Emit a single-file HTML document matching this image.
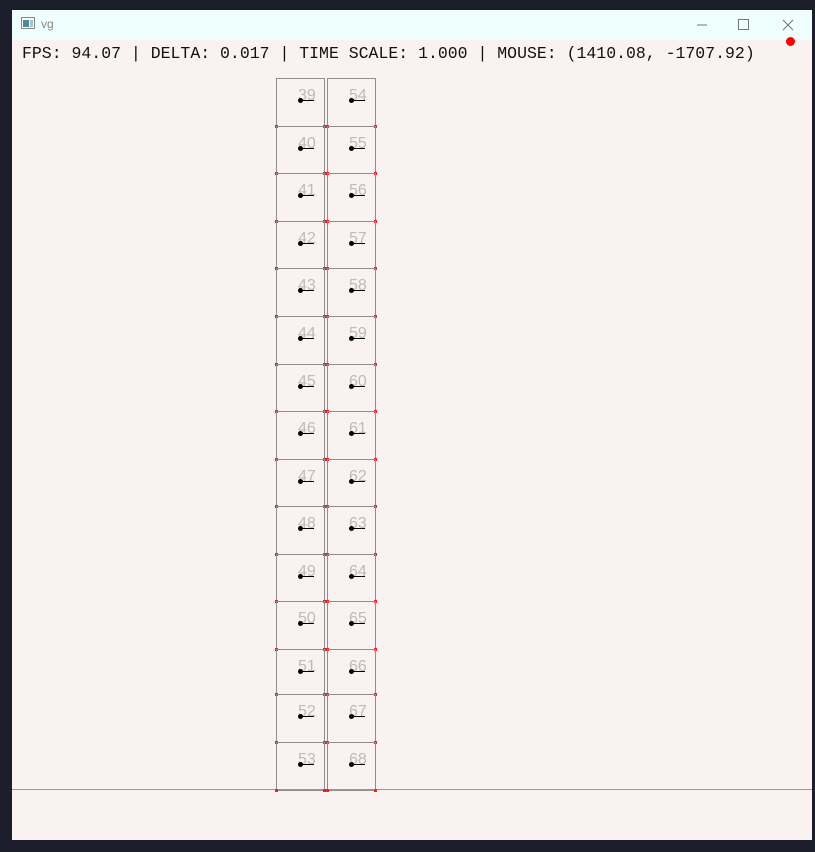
<!DOCTYPE html>
<html><head><meta charset="utf-8"><style>
*{margin:0;padding:0;box-sizing:border-box}
body{width:815px;height:852px;background:#1c1e2b;position:relative;overflow:hidden;font-family:"Liberation Sans",sans-serif}
#win{position:absolute;left:12px;top:10px;width:800px;height:830px;background:#faf2f0}
#title{position:absolute;left:0;top:0;width:800px;height:30px;background:#eefefd}
#title .t{position:absolute;left:29px;top:7px;font-size:12px;color:#888}
#hud{position:absolute;left:10px;top:34px;font-family:"Liberation Mono",monospace;font-size:16.5px;color:#111;white-space:pre}
.b{position:absolute;width:49px;border:1px solid #8e8e8e}
.d{position:absolute;width:5px;height:5px;border-radius:50%;background:#000}
.l{position:absolute;height:1px;width:14px;background:#000}
.n{position:absolute;font-size:16px;color:#bbb}
.c{position:absolute;width:3px;height:3px;background:#e22}
.g{position:absolute;left:0;top:779px;width:800px;height:1px;background:#999}
</style></head><body>
<div id="win">
<div id="title">
<svg style="position:absolute;left:9px;top:7px" width="14" height="12"><rect x="0.5" y="0.5" width="13" height="11" fill="#fff" stroke="#888"/><rect x="2" y="3" width="6" height="7" fill="#4a8a9a"/><rect x="9" y="3" width="3" height="7" fill="#9cc"/></svg>
<span class="t">vg</span>
<svg style="position:absolute;left:685px;top:8px" width="110" height="14"><line x0="0" x1="10" y1="7" y2="7" stroke="#777"/><rect x="41.5" y="1.5" width="10" height="10" fill="none" stroke="#777"/><path d="M86 2 L96 12 M96 2 L86 12" stroke="#777"/></svg>
<div style="position:absolute;left:774px;top:27px;width:9px;height:9px;border-radius:50%;background:#f00"></div>
</div>
<div id="hud">FPS: 94.07 | DELTA: 0.017 | TIME SCALE: 1.000 | MOUSE: (1410.08, -1707.92)</div>
<div class="g"></div>
<div id="boxes"></div>
</div>
<script>
var tops=[68,116,163,211,258,306,354,401,449,496,544,591,639,684,732,780];
var h='';
for(var i=0;i<15;i++){
 var t=tops[i],hh=tops[i+1]-t;
 [[264,39+i],[315,54+i]].forEach(function(c){
  var x=c[0];
  h+='<div class="b" style="left:'+x+'px;top:'+t+'px;height:'+(hh+1)+'px"></div>';
  h+='<div class="n" style="left:'+(x+22)+'px;top:'+(t+9)+'px">'+c[1]+'</div>';
  h+='<div class="d" style="left:'+(x+22)+'px;top:'+(t+20)+'px"></div>';
  h+='<div class="l" style="left:'+(x+24)+'px;top:'+(t+22)+'px"></div>';
  h+='<div class="c" style="left:'+(x-1)+'px;top:'+(t+hh-1)+'px"></div><div class="c" style="left:'+(x+47)+'px;top:'+(t+hh-1)+'px"></div>';
 });
}
document.getElementById('boxes').innerHTML=h;
</script>
</body></html>
